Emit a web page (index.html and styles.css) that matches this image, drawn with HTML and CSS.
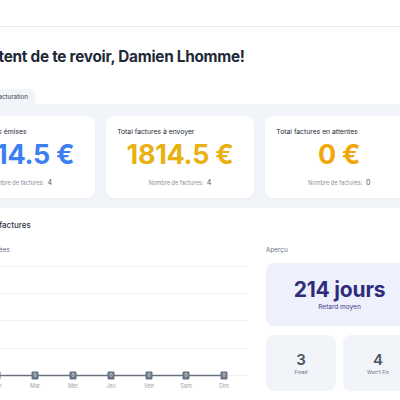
FILE: index.html
```html
<!DOCTYPE html>
<html lang="fr">
<head>
<meta charset="utf-8">
<title>Tableau de bord</title>
<link rel="stylesheet" href="styles.css">
</head>
<body>
<header class="topbar"></header>
<main class="page">
  <h1 class="greeting">Content de te revoir, Damien Lhomme!</h1>
  <div class="tabs"><div class="tab">Facturation</div></div>
  <section class="summary">
    <div class="cards">
      <div class="card">
        <div class="card-title">Total factures émises</div>
        <div class="card-value blue">1814.5 €</div>
        <div class="card-count">Nombre de factures: <span>4</span></div>
      </div>
      <div class="card">
        <div class="card-title">Total factures à envoyer</div>
        <div class="card-value yellow">1814.5 €</div>
        <div class="card-count">Nombre de factures: <span>4</span></div>
      </div>
      <div class="card">
        <div class="card-title">Total factures en attentes</div>
        <div class="card-value amber">0 €</div>
        <div class="card-count">Nombre de factures: <span>0</span></div>
      </div>
    </div>
  </section>
  <section class="stats">
    <div class="chart-col">
      <h2 class="stats-title">Statistiques factures</h2>
      <div class="label">Factures non payées</div>
      <svg class="chart" width="300" height="128" viewBox="0 0 300 128">
        <g stroke="#eef0f3" stroke-width="1">
          <line x1="20" y1="0.5" x2="300" y2="0.5"/>
          <line x1="20" y1="27.5" x2="300" y2="27.5"/>
          <line x1="20" y1="54.5" x2="300" y2="54.5"/>
          <line x1="20" y1="82.5" x2="300" y2="82.5"/>
          <line x1="20" y1="109.5" x2="300" y2="109.5"/>
        </g>
        <line x1="50" y1="109.5" x2="277" y2="109.5" stroke="#6b7280" stroke-width="1.4"/>
        <g fill="#687385">
          <rect x="46.5" y="105.5" width="7" height="8" rx="1"/>
          <rect x="84.5" y="105.5" width="7" height="8" rx="1"/>
          <rect x="122.5" y="105.5" width="7" height="8" rx="1"/>
          <rect x="160.5" y="105.5" width="7" height="8" rx="1"/>
          <rect x="198.5" y="105.5" width="7" height="8" rx="1"/>
          <rect x="235.5" y="105.5" width="7" height="8" rx="1"/>
          <rect x="273.5" y="105.5" width="7" height="8" rx="1"/>
        </g>
        <g fill="#ffffff" font-size="4.8" text-anchor="middle" font-family="Inter, sans-serif">
          <text x="50" y="111.4">0</text>
          <text x="88" y="111.4">0</text>
          <text x="126" y="111.4">0</text>
          <text x="164" y="111.4">0</text>
          <text x="202" y="111.4">0</text>
          <text x="239" y="111.4">0</text>
          <text x="277" y="111.4">0</text>
        </g>
        <g fill="#9ca3af" font-size="5.5" text-anchor="middle" font-family="Inter, sans-serif">
          <text x="50" y="121.5">Lun</text>
          <text x="88" y="121.5">Mar</text>
          <text x="126" y="121.5">Mer</text>
          <text x="164" y="121.5">Jeu</text>
          <text x="202" y="121.5">Ven</text>
          <text x="239" y="121.5">Sam</text>
          <text x="277" y="121.5">Dim</text>
        </g>
      </svg>
    </div>
    <div class="apercu">
      <div class="label">Aperçu</div>
      <div class="delay-box">
        <div class="delay-value">214 jours</div>
        <div class="delay-label">Retard moyen</div>
      </div>
      <div class="mini-row">
        <div class="mini">
          <div class="mini-value">3</div>
          <div class="mini-label">Fixed</div>
        </div>
        <div class="mini">
          <div class="mini-value">4</div>
          <div class="mini-label">Won't Fix</div>
        </div>
      </div>
    </div>
  </section>
</main>
</body>
</html>
```

FILE: styles.css
```css
* { box-sizing: border-box; }

html, body {
  margin: 0;
  padding: 0;
  background: #ffffff;
  overflow: hidden;
  font-family: Inter, "Noto Sans", sans-serif;
  color: #1f2937;
}

.topbar {
  height: 27px;
  border-bottom: 1px solid #e8eaee;
  background: #ffffff;
}

.page {
  width: 560px;
  margin-left: -80px;
}

.greeting {
  margin: 0;
  padding: 21px 0 0 49px;
  height: 62px;
  font-size: 15.3px;
  font-weight: 700;
  letter-spacing: -0.25px;
  line-height: 18px;
  color: #1f2937;
}

.tabs {
  display: flex;
  padding-left: 68px;
}

.tab {
  background: #f1f4f8;
  border-radius: 5px 5px 0 0;
  height: 15px;
  padding: 0 7px;
  font-size: 6.2px;
  line-height: 15px;
  color: #374151;
}

.summary {
  background: #f1f4f8;
  padding: 12px 67px 10px 27px;
}

.cards {
  display: grid;
  grid-template-columns: repeat(3, 1fr);
  gap: 11.5px;
}

.card {
  background: #ffffff;
  border-radius: 8px;
  height: 82px;
  padding: 11px 11px 0 11px;
  box-shadow: 0 1px 2px rgba(15, 23, 42, 0.04);
  display: flex;
  flex-direction: column;
}

.card-title {
  font-size: 6.8px;
  line-height: 10px;
  color: #262b33;
}

.card-value {
  text-align: center;
  font-size: 27px;
  font-weight: 700;
  line-height: 30px;
  margin-top: 3px;
  letter-spacing: -0.3px;
}

.blue { color: #3b7ff0; }
.yellow { color: #e8b10f; }
.amber { color: #f2a60a; }

.card-count {
  text-align: center;
  font-size: 5.6px;
  line-height: 8px;
  margin-top: 9px;
  color: #8a919c;
}

.card-count span {
  font-size: 7px;
  color: #4b5563;
  margin-left: 2px;
}

.stats {
  display: flex;
  gap: 11px;
  padding: 11px 67px 0 27px;
}

.chart-col {
  width: 308px;
  display: flex;
  flex-direction: column;
}

.stats-title {
  margin: 0;
  padding-left: 5px;
  font-size: 8px;
  font-weight: 500;
  line-height: 12px;
  color: #2f3540;
}

.label {
  font-size: 6.4px;
  line-height: 10px;
  color: #6b7280;
}

.chart-col .label {
  margin-top: 14px;
}

.chart {
  display: block;
  margin-top: 11px;
}

.apercu {
  width: 147px;
  display: flex;
  flex-direction: column;
  padding-top: 26px;
}

.delay-box {
  margin-top: 8px;
  height: 63px;
  border-radius: 8px;
  background: #eef0fb;
  display: flex;
  flex-direction: column;
  align-items: center;
  justify-content: center;
}

.delay-value {
  font-size: 21px;
  font-weight: 700;
  line-height: 24px;
  color: #2f2c7e;
  letter-spacing: -0.2px;
}

.delay-label {
  font-size: 6.5px;
  line-height: 9px;
  color: #3f3b8f;
  margin-top: 1px;
}

.mini-row {
  display: flex;
  gap: 7px;
  margin-top: 9px;
}

.mini {
  flex: 1;
  height: 56px;
  border-radius: 8px;
  background: #f1f4f9;
  display: flex;
  flex-direction: column;
  align-items: center;
  justify-content: center;
}

.mini-value {
  font-size: 15px;
  font-weight: 600;
  line-height: 17px;
  color: #4b5563;
}

.mini-label {
  font-size: 5px;
  line-height: 8px;
  color: #6b7280;
}
```
